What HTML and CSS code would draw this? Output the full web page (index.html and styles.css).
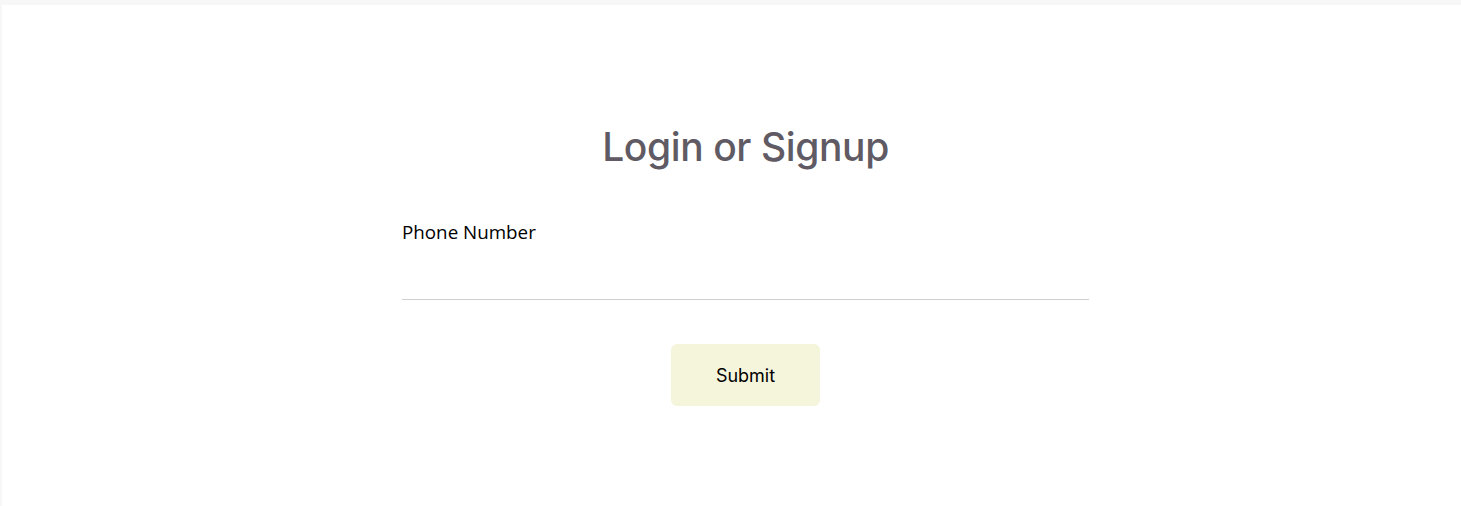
FILE: index.html
```html
<!DOCTYPE html>
<html lang="en">
<head>
  <meta charset="UTF-8">
  <meta name="viewport" content="width=device-width, initial-scale=1.0">
  <title>Login or Signup</title>
  <link rel="stylesheet" href="styles.css">
</head>
<body>
  <div class="panel">
    <form class="login-form" onsubmit="return false">
      <h2>Login or Signup</h2>
      <label for="phone">Phone Number</label>
      <input type="tel" id="phone">
      <div class="actions">
        <button type="submit">Submit</button>
      </div>
    </form>
  </div>
</body>
</html>
```

FILE: styles.css
```css
body {
  margin: 0;
  background: #f7f7f7;
  padding: 5px 0 0 2px;
}
.panel {
  background: #fff;
  height: 501px;
  display: flex;
  justify-content: center;
  padding-left: 28px;
}
.login-form {
  width: 687px;
  padding-top: 118px;
}
h2 {
  font-family: Inter, "Noto Sans", sans-serif;
  font-weight: 500;
  font-size: 39px;
  color: #5f5a63;
  text-align: center;
  margin: 0 0 49px;
  letter-spacing: -0.4px;
}
label {
  display: block;
  font-family: "Open Sans", sans-serif;
  font-size: 18.8px;
  color: #000;
}
input {
  display: block;
  width: 100%;
  box-sizing: border-box;
  border: none;
  border-bottom: 1px solid #cfcfcf;
  height: 55px;
  outline: none;
  font-size: 18px;
}
.actions {
  display: flex;
  justify-content: center;
  margin-top: 44px;
}
button {
  width: 149px;
  height: 62px;
  background: #f5f5dc;
  border: none;
  border-radius: 6px;
  font-family: Inter, sans-serif;
  font-size: 18px;
  color: #000;
  cursor: pointer;
}
```
